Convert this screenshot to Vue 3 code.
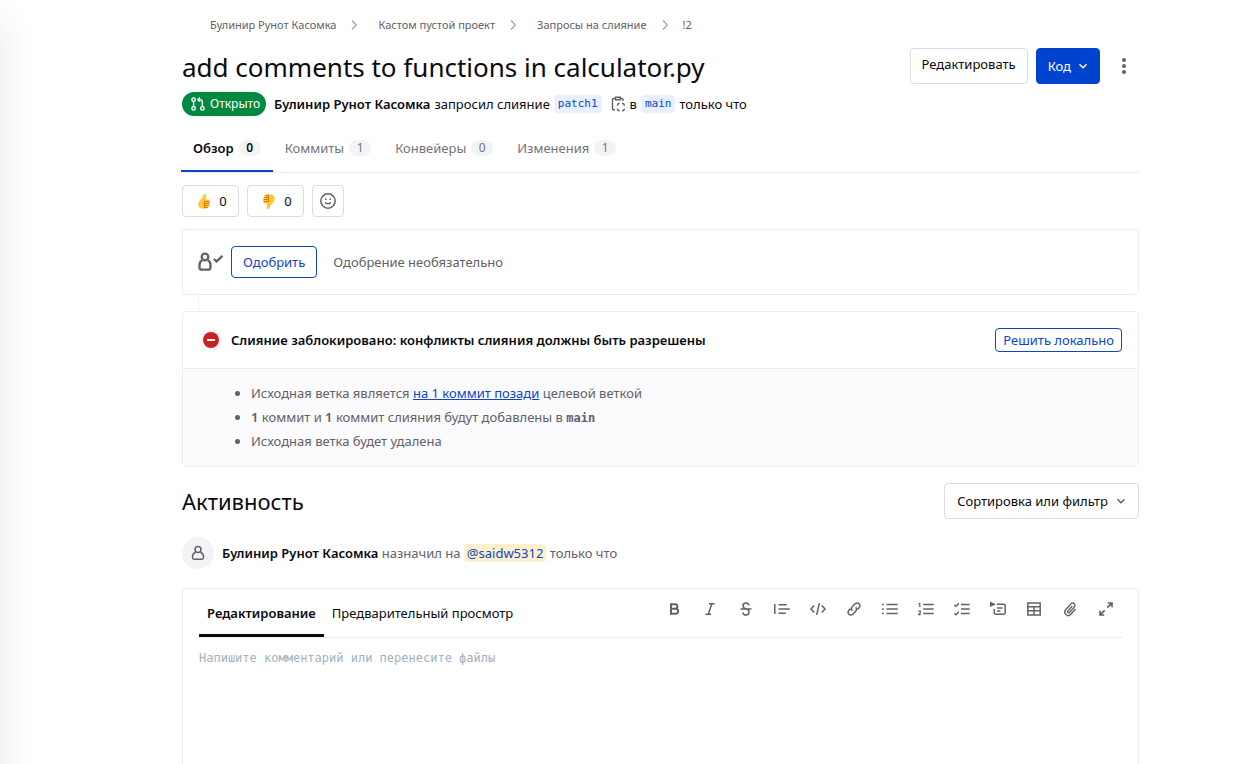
<script setup>
import { ref } from 'vue'

const crumbs = ['Булинир Рунот Касомка', 'Кастом пустой проект', 'Запросы на слияние', '!2']
const tabs = [
  { label: 'Обзор', count: 0 },
  { label: 'Коммиты', count: 1 },
  { label: 'Конвейеры', count: 0 },
  { label: 'Изменения', count: 1 },
]
const activeTab = ref('Обзор')
const comment = ref('')

const tools = [
  { name: 'Полужирный', paths: [{ d: 'M5 3.2h4.1a2.2 2.2 0 0 1 0 4.6H5zM5 7.8h4.7a2.4 2.4 0 0 1 0 4.9H5z', w: 2 }] },
  { name: 'Курсив', paths: [{ d: 'M7 2.8h5.5M3.5 13.2H9M9.8 2.8 6.3 13.2', w: 1.5 }] },
  { name: 'Зачёркнутый', paths: [{ d: 'M11 4.4C10.6 2.9 9.5 2 8 2 6.200 2 5 3.200 5 4.700c0 2.100 1.500 2.600 3 3.100 1.700.6 3 1.200 3 3.200 0 1.700-1.200 3-3 3-1.700 0-2.900-1-3.200-2.500M2.500 8h11', w: 1.5 }] },
  { name: 'Цитата', paths: [{ d: 'M.8 3v10M4.500 3.700h8.200M4.500 8h11.300M4.500 12.300h7.300', w: 1.5 }] },
  { name: 'Код', paths: [{ d: 'M4.200 4.500 1 8l3.200 3.500M11.800 4.500 15 8l-3.200 3.500M9.300 2.200 6.700 13.800', w: 1.5 }] },
  { name: 'Ссылка', paths: [{ d: 'M6.300 9.700a2.800 2.800 0 0 1 0-4l2.800-2.900a2.800 2.800 0 0 1 4 0 2.800 2.800 0 0 1 0 4l-1.600 1.600M9.700 6.300a2.800 2.800 0 0 1 0 4l-2.800 2.900a2.800 2.800 0 0 1-4 0 2.800 2.800 0 0 1 0-4l1.600-1.600', w: 1.5 }] },
  { name: 'Маркированный список', paths: [{ d: 'M4.500 3.500h11.200M4.500 8h11.200M4.500 12.500h11.200M0 3.500h1.800M0 8h1.800M0 12.500h1.800', w: 1.5 }] },
  { name: 'Нумерованный список', paths: [{ d: 'M5.200 3.500h10.500M5.200 8h10.500M5.200 12.500h10.500', w: 1.5 }, { d: 'M.3 2.500h1.500v3.700M.3 10.200h2v1.700L.5 13.700h2.200', w: 1.2 }] },
  { name: 'Список задач', paths: [{ d: 'M7 3.500h8.700M7 8h8.700M7 12.500h8.700M.4 4 2 5.300 4.800 2.200M.4 12.500 2 13.800l2.800-3.100', w: 1.5 }] },
  { name: 'Сворачиваемый раздел', paths: [{ d: 'M7 3.200h6.700a1.500 1.500 0 0 1 1.500 1.500v7a1.500 1.500 0 0 1-1.500 1.500h-8a1.500 1.500 0 0 1-1.500-1.500V8M7 7h5.500M7 10h3.500', w: 1.5 }, { d: 'M.5 1.500v3.600L4.500 3.300z', w: 1.2, fill: true }] },
  { name: 'Таблица', paths: [{ d: 'M1.800 2h12.400v12H1.800zM1.800 5.700h12.400M1.800 9.800h12.400M8 5.700V14', w: 1.5 }] },
  { name: 'Прикрепить файл', paths: [{ d: 'M10.300 5 6 9.900a1.100 1.100 0 0 0 1.700 1.400l4.700-5.400a2.300 2.300 0 0 0-3.500-3L3.700 8.800a3.400 3.400 0 0 0 5.100 4.500L13.500 8', w: 1.4 }] },
  { name: 'Во весь экран', paths: [{ d: 'M9.800 2h4.200v4.200M13.800 2.200 9.300 6.700M2 9.800V14h4.200M2.200 13.800l4.500-4.500', w: 1.7 }] },
]
</script>

<template>
  <div class="page">
    <div class="edge-shadow"></div>
    <nav class="crumbs" aria-label="Навигация">
      <template v-for="(c, i) in crumbs" :key="c">
        <svg v-if="i" class="crumb-arrow" viewBox="0 0 8 12"><path d="M2 1.500 6.200 6 2 10.500" /></svg>
        <a href="#">{{ c }}</a>
      </template>
    </nav>

    <header class="title-row">
      <h1>add comments to functions in calculator.py</h1>
      <div class="actions">
        <button class="btn edit">Редактировать</button>
        <button class="btn primary">Код
          <svg class="caret" viewBox="0 0 10 10"><path d="M1.500 3.200 5 6.700l3.500-3.500" /></svg>
        </button>
        <button class="more" aria-label="Ещё">
          <svg viewBox="0 0 16 16"><circle cx="8" cy="2" r="2" /><circle cx="8" cy="8" r="2" /><circle cx="8" cy="14" r="2" /></svg>
        </button>
      </div>
    </header>

    <div class="status">
      <span class="badge">
        <svg viewBox="0 0 16 16">
          <circle cx="3" cy="3" r="2" /><circle cx="3" cy="13" r="2" /><circle cx="13" cy="13" r="2" />
          <path d="M3 5v6M13 11V6a3 3 0 0 0-3-3H8M10.200.6 7.800 3l2.400 2.400" />
        </svg>Открыто
      </span>
      <strong>Булинир Рунот Касомка</strong>
      <span>запросил слияние</span>
      <a class="branch" href="#">patch1</a>
      <button class="copy" aria-label="Скопировать имя ветки">
        <svg viewBox="0 0 16 16">
          <path d="M5 13.800H3.500a1 1 0 0 1-1-1V3.500a1 1 0 0 1 1-1H5M10.500 2.500H12a1 1 0 0 1 1 1V5" />
          <path d="M5.500 1.200h4.800v2.600H5.500z" />
          <path d="M7.500 9.700V9A1.500 1.500 0 0 1 9 7.500h.7M12 7.500h.7A1.500 1.500 0 0 1 14.200 9v.7M14.200 12.500v.7a1.500 1.500 0 0 1-1.500 1.500H12M9.700 14.700H9a1.500 1.500 0 0 1-1.500-1.500v-.7" />
        </svg>
      </button>
      <span>в</span>
      <a class="branch" href="#">main</a>
      <span>только что</span>
    </div>

    <nav class="tabs" aria-label="Разделы">
      <button v-for="t in tabs" :key="t.label" class="tab" :class="{ active: activeTab === t.label }" @click="activeTab = t.label">
        {{ t.label }}<span class="count">{{ t.count }}</span>
      </button>
    </nav>

    <div class="reactions">
      <button class="btn react" aria-label="Нравится">
        <svg viewBox="0 0 14 18">
          <path fill="#ffc83d" d="M7.800.8C9 .6 9.400 1.700 9.300 3L9 7h3c1.300 0 1.500 1.200.9 1.800.6.500.6 1.600-.1 2.100.4.600.2 1.700-.5 2.100.3.700 0 1.700-.9 2-.2 1-1.100 1.500-2.400 1.500H5c-2.600 0-4.200-1.800-4.200-4.200C.8 9 3.200 7.800 4.800 5.600 5.800 4.100 6 1.200 7.800.8z" />
          <path fill="none" stroke="#d67d00" stroke-width="1.100" d="M12.700 9H7.500v7.200M7.500 11.100h5.200M7.500 13.300h4.800M7.500 15.300h3.600" />
        </svg>0
      </button>
      <button class="btn react" aria-label="Не нравится">
        <svg viewBox="0 0 14 18">
          <path fill="#ffc83d" d="M6.200 17.200C5 17.400 4.600 16.300 4.700 15L5 11H2c-1.300 0-1.500-1.200-.9-1.800-.6-.5-.6-1.600.1-2.100C.8 6.500 1 5.400 1.700 5 1.400 4.300 1.700 3.300 2.600 3c.2-1 1.100-1.500 2.400-1.500h4c2.600 0 4.200 1.800 4.200 4.200 0 3.300-2.400 4.500-4 6.700-1 1.500-1.200 4.400-3 4.800z" />
          <path fill="none" stroke="#d67d00" stroke-width="1.100" d="M1.300 9h5.200V1.800M6.500 6.900H1.300M6.500 4.700H1.700M6.500 2.700H2.900" />
        </svg>0
      </button>
      <button class="btn smile" aria-label="Добавить реакцию">
        <svg viewBox="0 0 16 16">
          <circle cx="8" cy="8" r="7.200" /><path d="M5.300 9.200c.7 1.900 4.700 1.900 5.400 0" /><path d="M5 6.200h1.600M9.400 6.200H11" />
        </svg>
      </button>
    </div>

    <section class="card approve">
      <svg class="approver" viewBox="0 0 26 20">
        <path d="M10.300 5a3.300 3.300 0 1 1-6.600 0 3.300 3.300 0 0 1 6.600 0z" />
        <path d="M4.200 8.300C2.400 9.200 1.500 11 1.500 13v2.400c0 1.600.8 2.300 2.300 2.300h6.400c1.500 0 2.300-.7 2.300-2.300V13c0-2-.9-3.800-2.700-4.700" />
        <path d="m15.800 7 2.700 2.400 6-5.500" />
      </svg>
      <button class="btn outline">Одобрить</button>
      <span>Одобрение необязательно</span>
    </section>
    <div class="connector"></div>

    <section class="card">
      <div class="merge-head">
        <span class="blocked"><i></i></span>
        <strong>Слияние заблокировано: конфликты слияния должны быть разрешены</strong>
        <button class="btn outline small">Решить локально</button>
      </div>
      <ul class="merge-list">
        <li>Исходная ветка является <a href="#">на 1 коммит позади</a> целевой веткой</li>
        <li><b>1</b> коммит и <b>1</b> коммит слияния будут добавлены в <code>main</code></li>
        <li>Исходная ветка будет удалена</li>
      </ul>
    </section>

    <div class="activity-head">
      <h2>Активность</h2>
      <button class="btn sort">Сортировка или фильтр
        <svg class="caret" viewBox="0 0 10 10"><path d="M1.500 3.200 5 6.700l3.500-3.500" /></svg>
      </button>
    </div>

    <div class="event">
      <span class="avatar">
        <svg viewBox="0 0 16 16">
          <circle cx="8" cy="4.500" r="3" />
          <path d="M5.500 7.300C3.500 8.200 2.500 9.800 2.500 11.700v.8c0 1.200.6 1.700 1.700 1.700h7.600c1.100 0 1.700-.5 1.700-1.700v-.8c0-1.900-1-3.500-3-4.400" />
        </svg>
      </span>
      <p><strong>Булинир Рунот Касомка</strong> назначил на <a class="mention" href="#">@saidw5312</a> только что</p>
    </div>

    <section class="editor">
      <div class="editor-head">
        <button class="mode active">Редактирование</button>
        <button class="mode">Предварительный просмотр</button>
        <div class="tools">
          <button v-for="t in tools" :key="t.name" class="tool" :aria-label="t.name">
            <svg viewBox="0 0 16 16">
              <path v-for="p in t.paths" :key="p.d" :d="p.d" :stroke-width="p.w" :class="{ solid: p.fill }" />
            </svg>
          </button>
        </div>
      </div>
      <textarea v-model="comment" aria-label="Комментарий" placeholder="Напишите комментарий или перенесите файлы"></textarea>
    </section>
  </div>
</template>

<style>
body { margin: 0; background: #fff; }
</style>

<style scoped>
* { box-sizing: border-box; }
.page {
  position: relative;
  display: flex;
  flex-direction: column;
  min-height: 100vh;
  padding: 17px 110px 0 182px;
  overflow: hidden;
  color: #0a0a0f;
  font: 13px/20px "Noto Sans", "Open Sans", sans-serif;
}
.edge-shadow {
  position: absolute;
  top: 20px;
  bottom: -40px;
  left: -20px;
  width: 20px;
  box-shadow: 0 0 34px rgba(31, 50, 86, 0.14);
}
a { color: #0b46c9; }
button { font: inherit; color: inherit; margin: 0; padding: 0; border: 0; background: none; cursor: pointer; }
svg { display: block; fill: none; stroke: currentColor; flex: none; }
strong { font-weight: 600; }

.crumbs { display: flex; align-items: center; height: 16px; padding-left: 28px; font-size: 11px; line-height: 16px; }
.crumbs a { color: #626168; text-decoration: none; }
.crumb-arrow { width: 8px; height: 12px; margin: 0 20px 0 14px; color: #a4a3a8; stroke-width: 1.2; }
.crumb-arrow:last-of-type { margin-right: 14px; }

.title-row { display: flex; justify-content: space-between; margin-top: 15px; }
h1 { margin: 0; font-size: 26px; line-height: 38px; font-weight: 400; }
.actions { display: flex; gap: 8px; }
.btn { display: flex; align-items: center; justify-content: center; height: 32px; border: 1px solid #dcdcde; border-radius: 4px; background: #fff; }
.edit { height: 36px; padding: 0 11px 4px; }
.primary { height: 36px; padding: 0 11px; gap: 7px; color: #fff; background: #0043ce; border-color: #0043ce; }
.caret { width: 10px; height: 10px; stroke-width: 1.500; }
.more { width: 31px; height: 36px; color: #626168; }
.more svg { width: 16px; height: 16px; margin: 0 auto; fill: currentColor; stroke: none; }

.status { display: flex; align-items: center; gap: 4px; height: 24px; margin-top: 6px; }
.badge { display: flex; align-items: center; gap: 4px; height: 24px; margin-right: 4px; padding: 0 6px 0 8px; border-radius: 12px; background: #00893f; color: #fff; font-size: 12px; }
.badge svg { width: 16px; height: 14px; stroke-width: 1.600; }
.branch { padding: 0 4px; border-radius: 4px; background: #e9f0fd; font: 11px/18px "DejaVu Sans Mono", monospace; text-decoration: none; }
.copy { margin-left: 4px; color: #626168; }
.copy svg { width: 16px; height: 16px; stroke-width: 1.400; }

.tabs { display: flex; height: 49px; margin: 8px 0 0 -1px; border-bottom: 1px solid #ececef; }
.tab { display: flex; align-items: center; gap: 5px; height: 48px; padding: 2px 12px 0; color: #737278; border-bottom: 2px solid transparent; }
.tab.active { color: #0a0a0f; font-weight: 600; border-color: #0b46c9; }
.count { min-width: 22px; border-radius: 8px; background: #f2f3f6; font-size: 12px; line-height: 16px; text-align: center; }

.reactions { display: flex; gap: 8px; margin-top: 12px; }
.react { min-width: 57px; gap: 8px; padding-left: 3px; }
.react svg { width: 14px; height: 17px; stroke: none; }
.smile { width: 32px; color: #626168; }
.smile svg { width: 16px; height: 16px; stroke-width: 1.500; }

.card { border: 1px solid #ececef; border-radius: 4px; }
.approve { display: flex; align-items: center; height: 66px; margin-top: 12px; padding: 0 15px; color: #626168; }
.approver { width: 26px; height: 20px; stroke-width: 2.300; }
.outline { margin: 0 16px 0 7px; padding: 0 11px; color: #0b46c9; border-color: #0b46c9; }
.connector { width: 1px; height: 16px; margin-left: 16px; background: #f2f2f6; }
.merge-head { display: flex; align-items: center; height: 57px; padding: 0 16px; border-bottom: 1px solid #ececef; }
.blocked { display: flex; align-items: center; justify-content: center; width: 16px; height: 16px; margin: 0 12px 0 4px; border-radius: 50%; background: #cc1f1f; box-shadow: 0 0 0 4px #f6f7f9; }
.blocked i { width: 8px; height: 2px; background: #fff; }
.small { height: 24px; margin: 0 0 0 auto; padding: 0 7px; }
.merge-list { margin: 0; padding: 12px 16px 13px 68px; background: #fbfafd; color: #626168; line-height: 24px; }
.merge-list code { font: bold 12px/20px "DejaVu Sans Mono", monospace; }
.merge-list b { font-weight: 600; }

.activity-head { display: flex; align-items: center; justify-content: space-between; margin-top: 16px; }
h2 { margin: 0; font-size: 22px; line-height: 32px; font-weight: 400; }
.sort { height: 36px; padding: 0 12px; gap: 8px; }
.sort .caret { color: #626168; }
.event { display: flex; align-items: center; gap: 8px; margin-top: 18px; color: #626168; }
.event p { margin: 0; }
.event strong { color: #0a0a0f; }
.avatar { display: flex; align-items: center; justify-content: center; width: 32px; height: 32px; border-radius: 50%; background: #f2f3f6; }
.avatar svg { width: 16px; height: 16px; stroke-width: 1.500; }
.mention { padding: 0 3px; border-radius: 4px; background: #fdf0cd; text-decoration: none; }

.editor { display: flex; flex: 1; flex-direction: column; min-height: 176px; margin-top: 19px; padding: 0 16px; border: 1px solid #ececef; border-bottom: 0; border-radius: 4px 4px 0 0; }
.editor-head { display: flex; height: 49px; border-bottom: 1px solid #ececef; }
.mode { height: 48px; padding: 3px 8px 0; border-bottom: 3px solid transparent; }
.mode.active { font-weight: 600; border-color: #0a0a0f; }
.tools { display: flex; gap: 12px; margin: 8px 4px 0 auto; color: #626168; }
.tool { width: 24px; height: 24px; }
.tool svg { width: 16px; height: 16px; margin: 0 auto; }
.solid { fill: currentColor; }
textarea { flex: 1; width: 100%; padding: 10px 0; border: 0; outline: 0; resize: none; background: none; color: #28272d; font: 12px/20px "DejaVu Sans Mono", monospace; }
textarea::placeholder { color: #a3b0c0; opacity: 1; }
</style>
